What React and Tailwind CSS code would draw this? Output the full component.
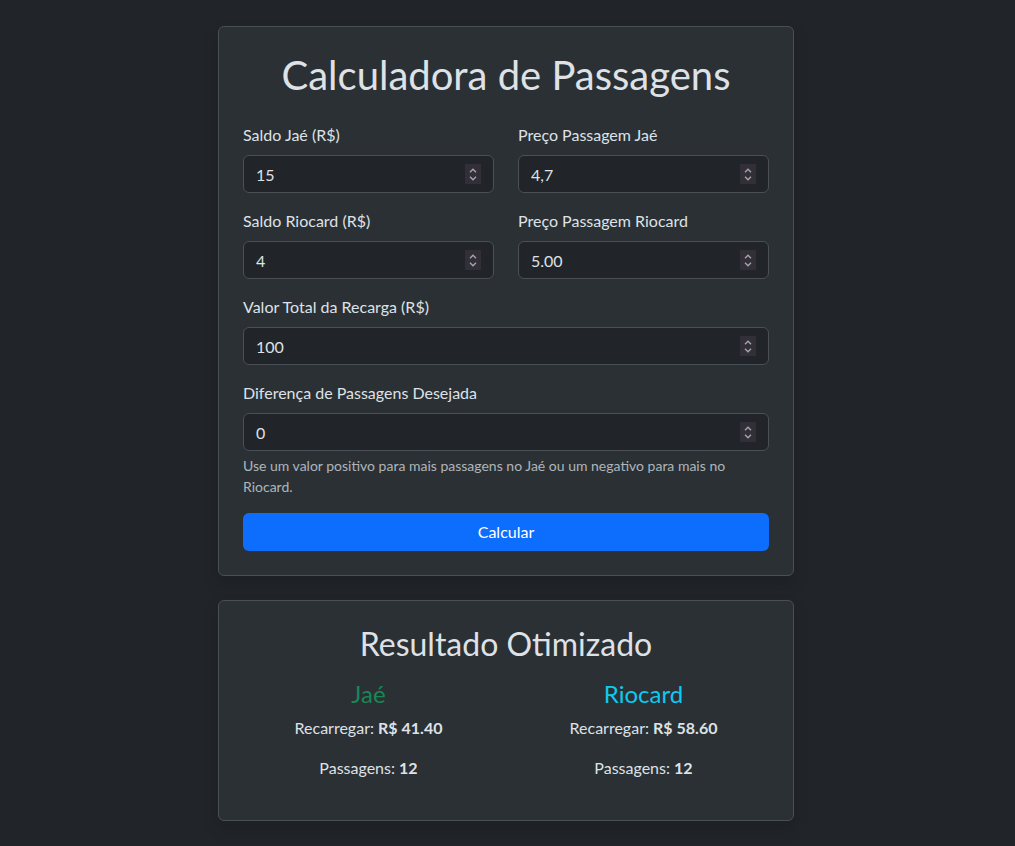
function Spinner() {
  return (
    <div className="absolute right-[13px] top-1/2 -translate-y-1/2 w-4 h-[20px] bg-[#332f39] flex flex-col items-center justify-center gap-[3px] pointer-events-none">
      <svg width="8" height="5" viewBox="0 0 8 5" fill="none">
        <path d="M1 4.2L4 1.2L7 4.2" stroke="#a9a6b0" strokeWidth="1.3" />
      </svg>
      <svg width="8" height="5" viewBox="0 0 8 5" fill="none">
        <path d="M1 0.8L4 3.8L7 0.8" stroke="#a9a6b0" strokeWidth="1.3" />
      </svg>
    </div>
  );
}

function NumInput({ value }) {
  return (
    <div className="relative">
      <input
        type="text"
        defaultValue={value}
        className="block w-full h-[38px] pl-3 pr-10 rounded-[6px] border border-[#495057] bg-[#212529] text-[#dee2e6] text-[16px] leading-6 outline-none"
      />
      <Spinner />
    </div>
  );
}

function Field({ label, value, className = '' }) {
  return (
    <div className={className}>
      <label className="block mb-2 text-[16px] leading-6">{label}</label>
      <NumInput value={value} />
    </div>
  );
}

export default function App() {
  return (
    <div
      className="min-h-[846px] bg-[#212529] text-[#dee2e6] pt-[26px] pb-6"
      style={{ fontFamily: 'Lato, "Noto Sans", sans-serif' }}
    >
      <div className="w-[576px] ml-[218px]">
        <div className="bg-[#2b3035] border border-[#4a4f54] rounded-[6px] p-6 shadow-[0_0.5rem_1rem_rgba(0,0,0,0.15)]">
          <h1 className="text-[40px] leading-[48px] text-center mb-6 font-normal">Calculadora de Passagens</h1>
          <div className="grid grid-cols-2 gap-x-6 gap-y-4">
            <Field label="Saldo Jaé (R$)" value="15" />
            <Field label="Preço Passagem Jaé" value="4,7" />
            <Field label="Saldo Riocard (R$)" value="4" />
            <Field label="Preço Passagem Riocard" value="5.00" />
            <Field label="Valor Total da Recarga (R$)" value="100" className="col-span-2" />
            <div className="col-span-2">
              <label className="block mb-2 text-[16px] leading-6">Diferença de Passagens Desejada</label>
              <NumInput value="0" />
              <div className="mt-1 text-[14px] leading-[21px] text-[rgba(222,226,230,0.75)]">
                Use um valor positivo para mais passagens no Jaé ou um negativo para mais no Riocard.
              </div>
            </div>
          </div>
          <button className="mt-4 w-full h-[38px] rounded-[6px] bg-[#0d6efd] text-white text-[16px] leading-6">
            Calcular
          </button>
        </div>

        <div className="mt-6 bg-[#2b3035] border border-[#4a4f54] rounded-[6px] p-6 shadow-[0_0.5rem_1rem_rgba(0,0,0,0.15)] text-center">
          <h2 className="text-[32px] leading-[38px] mb-4 font-normal">Resultado Otimizado</h2>
          <div className="grid grid-cols-2 gap-x-6">
            <div>
              <h4 className="text-[24px] leading-[29px] mb-2 text-[#198754]">Jaé</h4>
              <p className="mb-4 leading-6">Recarregar: <strong className="font-bold">R$ 41.40</strong></p>
              <p className="mb-4 leading-6">Passagens: <strong className="font-bold">12</strong></p>
            </div>
            <div>
              <h4 className="text-[24px] leading-[29px] mb-2 text-[#0dcaf0]">Riocard</h4>
              <p className="mb-4 leading-6">Recarregar: <strong className="font-bold">R$ 58.60</strong></p>
              <p className="mb-4 leading-6">Passagens: <strong className="font-bold">12</strong></p>
            </div>
          </div>
        </div>
      </div>
    </div>
  );
}
